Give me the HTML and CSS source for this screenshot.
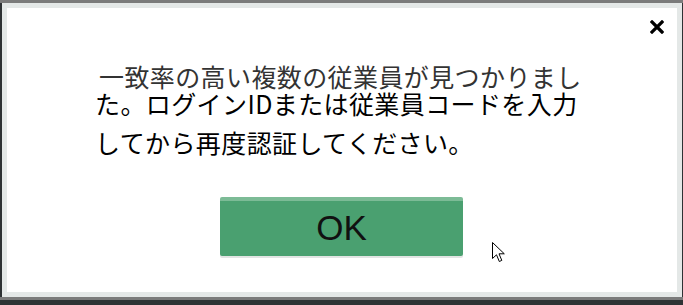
FILE: index.html
```html
<!DOCTYPE html>
<html lang="ja">
<head>
  <meta charset="UTF-8">
  <title>認証エラー</title>
  <link rel="stylesheet" href="styles.css">
</head>
<body>

  <div class="dialog">

    <div class="dialog-head">
      <button class="close-button" aria-label="閉じる">
        <svg width="14" height="14" viewBox="0 0 14 14">
          <path d="M2 2 L12 12 M12 2 L2 12" stroke="#000" stroke-width="3.2" stroke-linecap="square"/>
        </svg>
      </button>
    </div>

    <!-- message -->
    <div class="message">
      <span class="msg-line first">一致率の高い複数の従業員が見つかりまし</span>
      <span class="msg-line second">た。ログインIDまたは従業員コードを入力</span>
      <span class="msg-line third">してから再度認証してください。</span>
    </div>

    <div class="actions">
      <button class="ok-button">OK</button>
    </div>

    <svg class="cursor" width="14" height="22" viewBox="0 0 14 22">
      <path d="M0.5 0.5 L0.5 16.5 L4.5 12.8 L7.3 19.5 L9.8 18.4 L7 11.8 L12.3 11.8 Z" fill="#fff" stroke="#000" stroke-width="1"/>
    </svg>

  </div>

</body>
</html>
```

FILE: styles.css
```css
body {
  margin: 0;
  background: linear-gradient(#7b7b7b 0 3px, #2e3234 3px);
  font-family: "Noto Sans CJK JP", "Noto Sans", sans-serif;
}

.dialog {
  position: relative;
  width: 670px;
  height: 284px;
  margin: 3px 0 0 2px;
  border: 5px solid #e4e8e7;
  background: #ffffff;
}

.dialog-head {
  display: flex;
  justify-content: flex-end;
  padding: 12px 13px 0 0;
}

.close-button {
  display: block;
  width: 14px;
  height: 14px;
  padding: 0;
  border: none;
  background: none;
  cursor: pointer;
}

.close-button svg {
  display: block;
}

.message {
  margin-top: 30px;
  padding-left: 88px;
  font-size: 25px;
  letter-spacing: 0.4px;
}

.msg-line {
  display: block;
  white-space: nowrap;
  line-height: 25px;
}

.msg-line.first {
  height: 27px;
  padding-left: 4px;
  color: #333;
}

.msg-line.second {
  height: 39px;
  color: #000;
}

.msg-line.third {
  color: #000;
}

.actions {
  margin-top: 42px;
  padding-left: 213px;
}

.ok-button {
  display: block;
  width: 243px;
  height: 59px;
  padding: 0 0 2px;
  border: none;
  border-top: 4px solid #7cbb96;
  border-radius: 2px;
  background-color: #4aa070;
  box-shadow: 0 2px 0 #e2e4e3;
  color: #111;
  font-family: "Liberation Sans", Arial, sans-serif;
  font-size: 35px;
  cursor: pointer;
}

.cursor {
  position: absolute;
  left: 485px;
  top: 234px;
}
```
